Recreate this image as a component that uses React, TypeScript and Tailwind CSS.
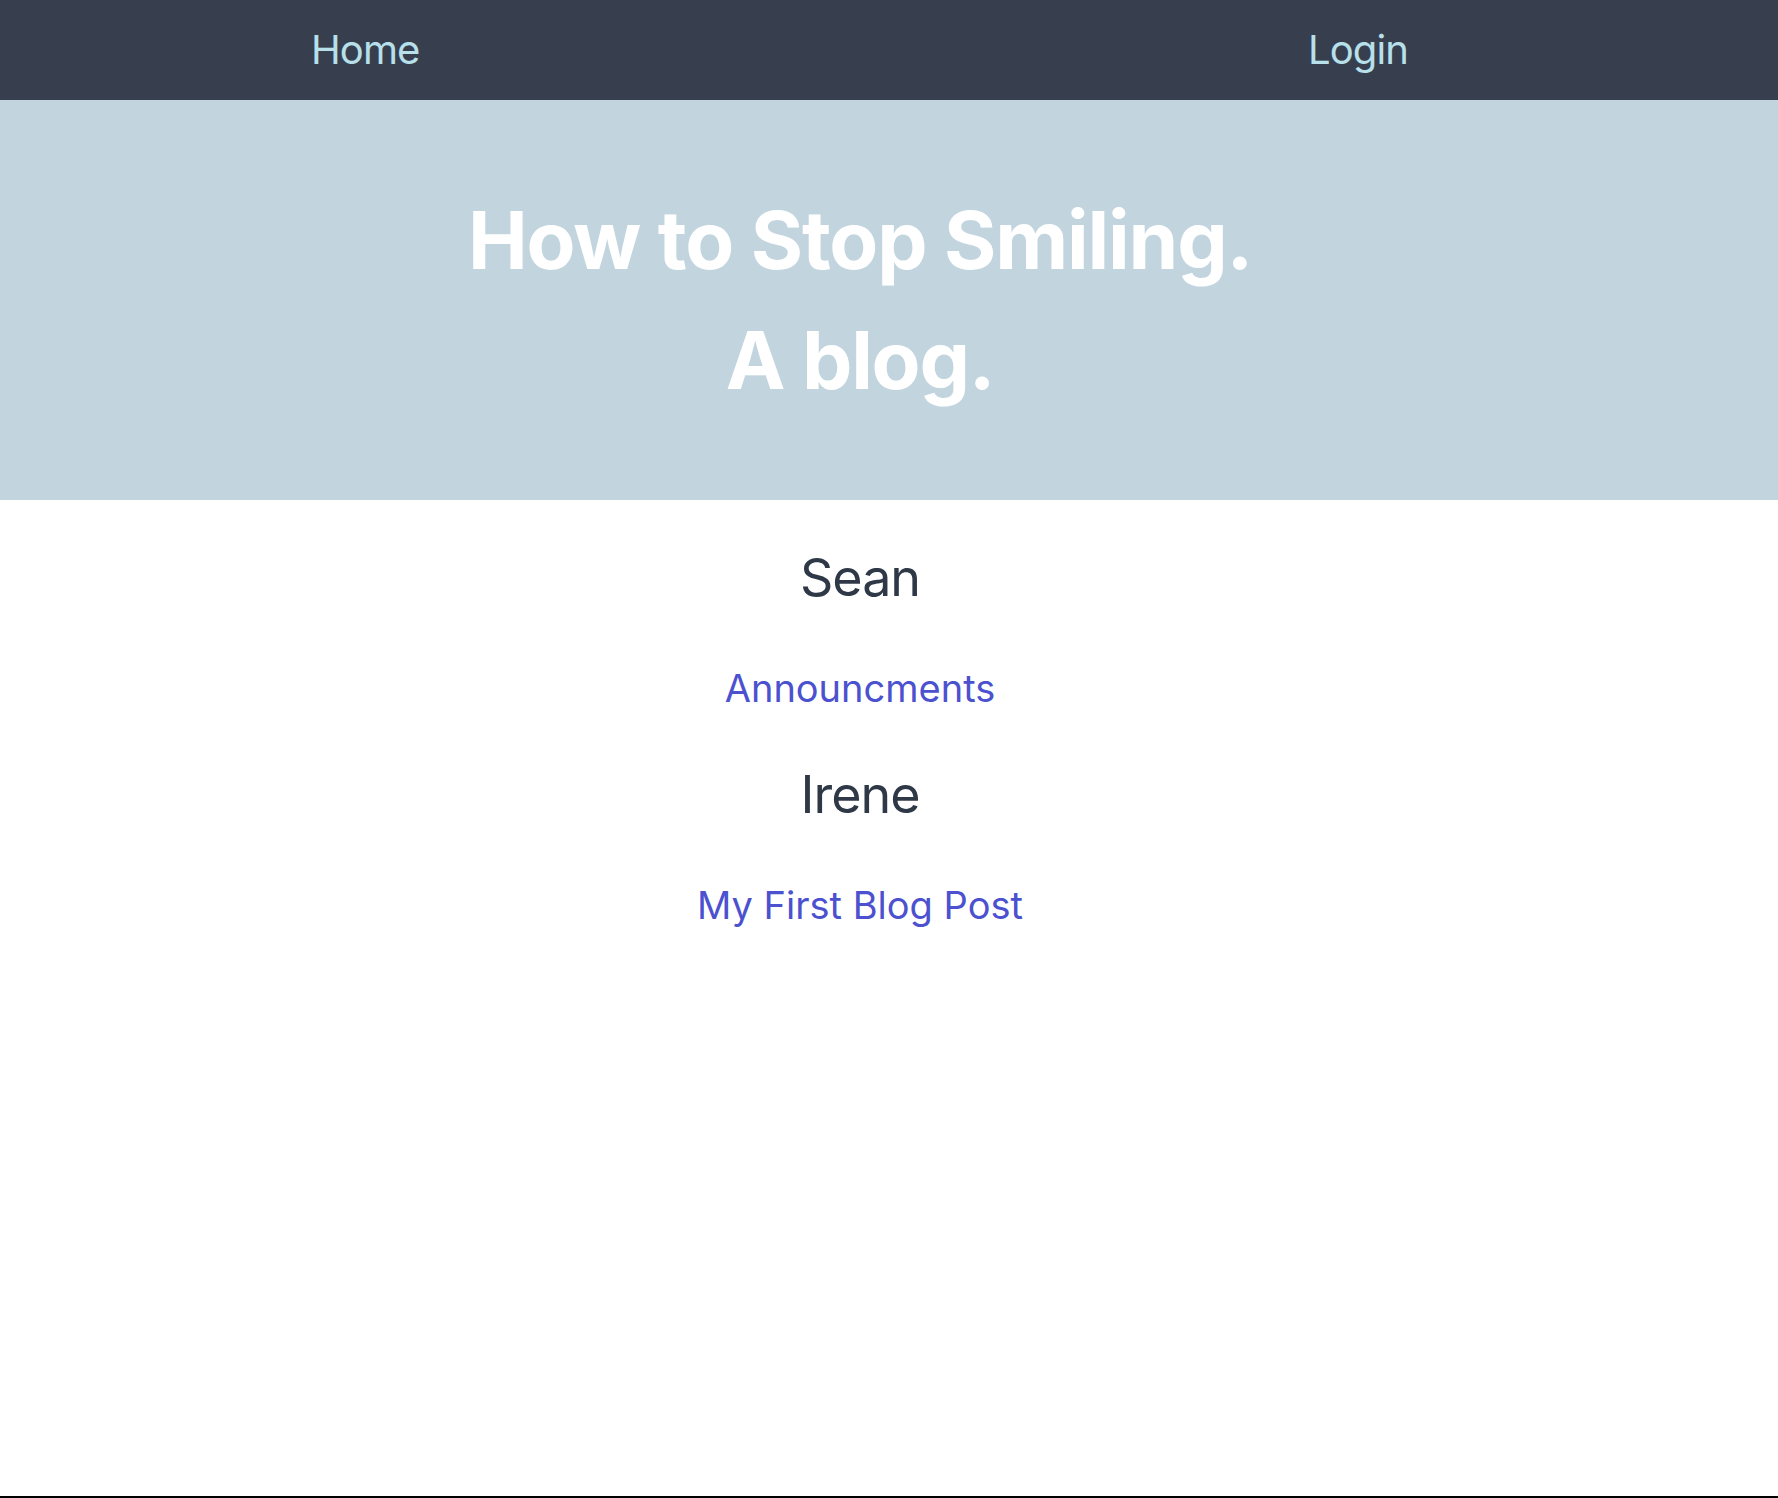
import React from "react";

export default function App() {
  const font = { fontFamily: "Inter, 'Noto Sans', sans-serif" };
  return (
    <div className="min-h-[1498px] w-full bg-white flex flex-col" style={font}>
      <header className="h-[100px] w-full bg-[#373f4f]">
        <nav className="w-[1720px] h-full flex items-center justify-between pl-[311px] pr-[312px]">
          <a className="text-[40px] leading-[48px] tracking-[-0.9px] text-[#b8e0ea]">Home</a>
          <a className="text-[40px] leading-[48px] tracking-[-0.9px] text-[#b8e0ea]">Login</a>
        </nav>
      </header>
      <section className="w-full h-[400px] bg-[#c2d5df]">
        <div className="w-[1720px] h-full flex flex-col items-center justify-center">
          <h1 className="text-[80px] leading-[120px] font-bold tracking-[-1.2px] text-white text-center">
            How to Stop Smiling.
            <br />
            A blog.
          </h1>
        </div>
      </section>
      <main className="w-[1720px] flex flex-col items-center pt-[46px] flex-1">
        <h2 className="text-[52px] leading-[64px] tracking-[-1px] text-[#2f3846] mb-[50px]">Sean</h2>
        <a className="text-[38px] leading-[57px] text-[#4b51cf] mb-[46px]">Announcments</a>
        <h2 className="text-[52px] leading-[64px] tracking-[-1px] text-[#2f3846] mb-[50px]">Irene</h2>
        <a className="text-[38px] leading-[57px] text-[#4b51cf]">My First Blog Post</a>
      </main>
      <div className="h-[2px] w-full bg-black"></div>
    </div>
  );
}
